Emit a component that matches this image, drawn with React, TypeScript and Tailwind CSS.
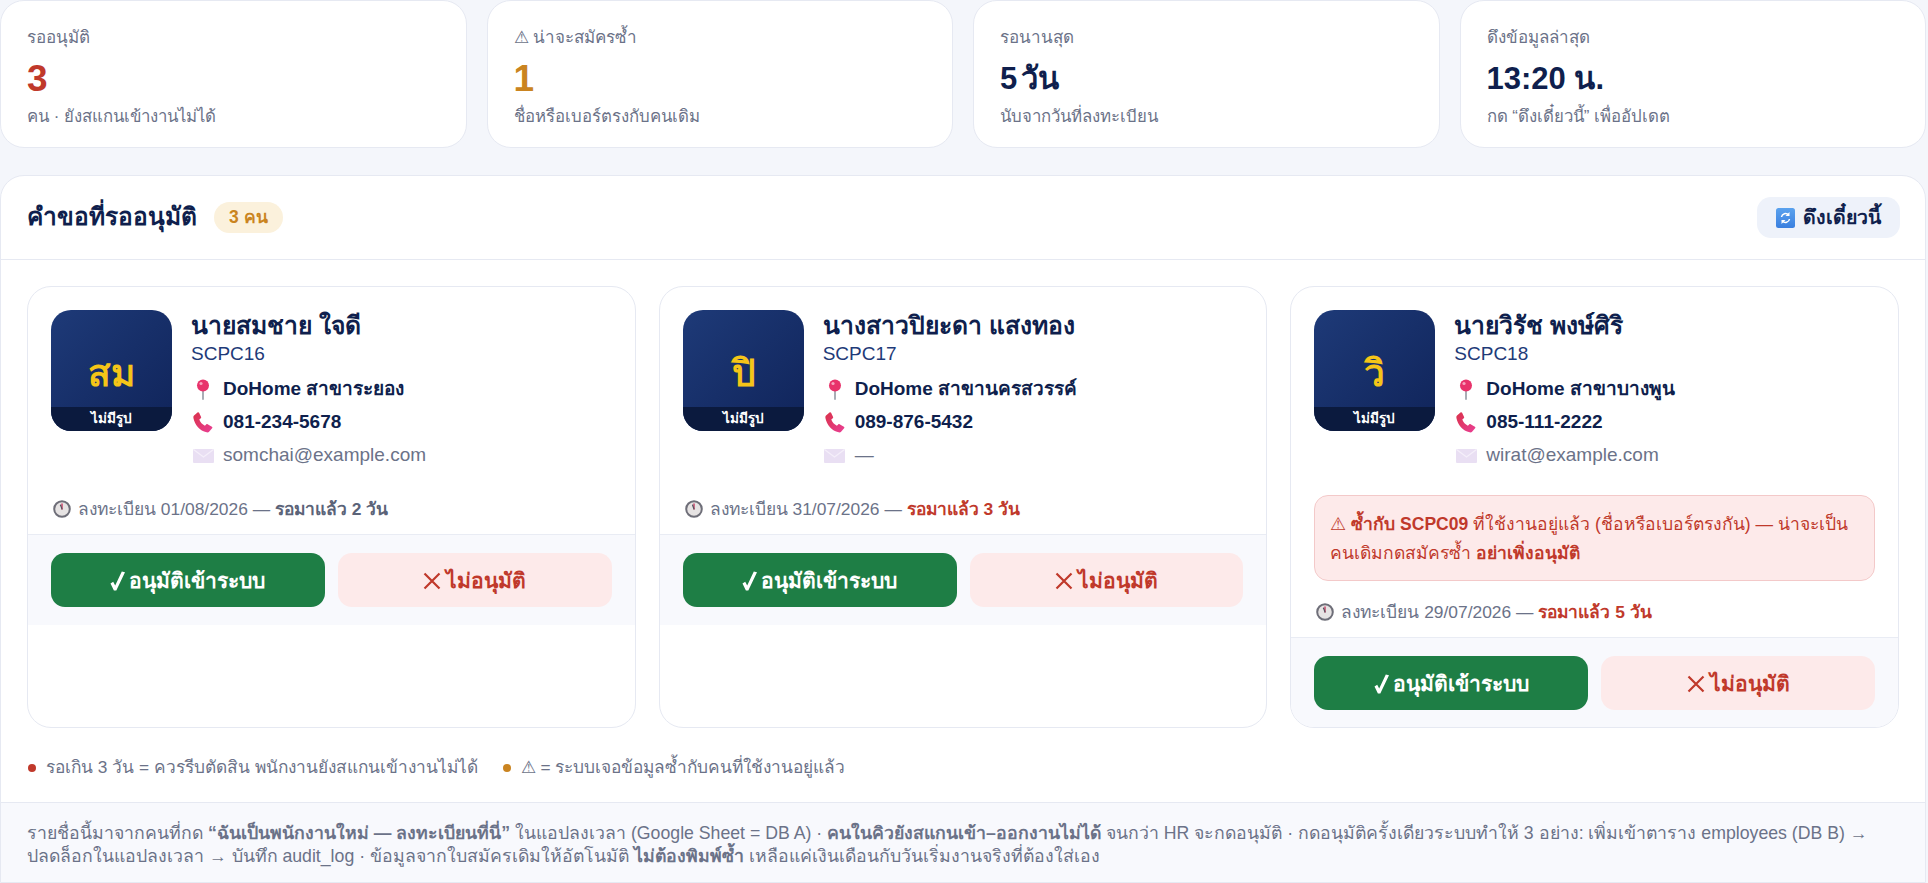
import type { ReactNode } from "react";

type Request = {
  initials: string;
  name: string;
  code: string;
  branch: string;
  phone: string;
  email: string;
  date: string;
  days: number;
  duplicate?: boolean;
};

const requests: Request[] = [
  { initials: "สม", name: "นายสมชาย ใจดี", code: "SCPC16", branch: "สาขาระยอง", phone: "081-234-5678", email: "somchai@example.com", date: "01/08/2026", days: 2 },
  { initials: "ปิ", name: "นางสาวปิยะดา แสงทอง", code: "SCPC17", branch: "สาขานครสวรรค์", phone: "089-876-5432", email: "—", date: "31/07/2026", days: 3 },
  { initials: "วิ", name: "นายวิรัช พงษ์ศิริ", code: "SCPC18", branch: "สาขาบางพูน", phone: "085-111-2222", email: "wirat@example.com", date: "29/07/2026", days: 5, duplicate: true },
];

function PinIcon() {
  return (
    <svg width="14" height="21" viewBox="0 0 14 21">
      <rect x="6" y="10" width="2" height="11" rx="1" fill="#a9adb5" />
      <circle cx="7" cy="6.5" r="6" fill="#e8336b" />
      <circle cx="5" cy="4.5" r="1.6" fill="#f7a3bd" />
    </svg>
  );
}

function PhoneIcon() {
  return (
    <svg width="20" height="21" viewBox="0 0 20 21">
      <defs>
        <linearGradient id="phone" x1="0" y1="0" x2="1" y2="1">
          <stop offset="0" stopColor="#d9324a" />
          <stop offset="1" stopColor="#ea3f95" />
        </linearGradient>
      </defs>
      <path
        d="M1 3.5 4.5.5c.6-.5 1.3-.3 1.6.3l2 4.2c.2.5.1 1-.3 1.3L6.300 7.500c1 2.700 3 5 5.600 6.200l1.300-1.300c.4-.4.900-.5 1.400-.2l4.300 2.500c.6.3.7 1 .2 1.500l-2.800 3.300c-.7.800-1.700 1.100-2.700.8C6.800 18.800 1.800 13 .4 6 .2 5 .4 4.100 1 3.500Z"
        fill="url(#phone)"
      />
    </svg>
  );
}

function MailIcon() {
  return (
    <svg width="21" height="14" viewBox="0 0 21 14">
      <rect width="21" height="14" rx="1" fill="#e9dff3" />
      <path d="M.5.500 10.500 8l10-7.500" fill="none" stroke="#f5effa" strokeWidth="1.200" />
    </svg>
  );
}

function ClockIcon() {
  return (
    <svg width="18" height="18" viewBox="0 0 18 18" className="ml-[2px] shrink-0">
      <circle cx="9" cy="9" r="7.800" fill="#e6e3e3" stroke="#6e6e78" strokeWidth="2" />
      <path d="M9 9V4" stroke="#c9446a" strokeWidth="1.500" strokeLinecap="round" />
      <path d="M9 9 7.500 5" stroke="#55555f" strokeWidth="1.200" strokeLinecap="round" />
    </svg>
  );
}

function RefreshIcon() {
  return (
    <svg width="19" height="20" viewBox="0 0 19 20" className="shrink-0">
      <defs>
        <linearGradient id="refresh" x1="0" y1="0" x2="0" y2="1">
          <stop offset="0" stopColor="#5aa2ee" />
          <stop offset="1" stopColor="#3a7fdf" />
        </linearGradient>
      </defs>
      <rect width="19" height="20" rx="2.500" fill="url(#refresh)" />
      <path d="M5.500 9a4 4 0 0 1 7-2M13.500 11a4 4 0 0 1-7 2" fill="none" stroke="#fff" strokeWidth="1.500" />
      <path d="M13.500 4v4h-4zM5.500 16v-4h4z" fill="#fff" />
    </svg>
  );
}

function CheckIcon() {
  return (
    <svg width="15" height="20" viewBox="0 0 15 20" className="shrink-0">
      <path d="M.5 12.500 3.200 10.800l2 3.700L11.800.5 15 1.200 6.300 19.500H3.900z" fill="#fff" />
    </svg>
  );
}

function CrossIcon() {
  return (
    <svg width="18" height="18" viewBox="0 0 18 18" className="shrink-0">
      <path d="M1.500 1.500l15 15M16.500 1.500l-15 15" stroke="#c0392b" strokeWidth="2.200" />
    </svg>
  );
}

function Stat({ label, value, sub, color, big }: { label: string; value: string; sub: string; color: string; big?: boolean }) {
  return (
    <div className="h-[148px] rounded-[24px] border border-[#e6e9f2] bg-white px-[26px] pt-[24px]">
      <div className="text-[17px] leading-[26px] text-[#6b7288]">{label}</div>
      <div className={`mt-[6px] h-[44px] font-bold leading-[44px] ${big ? "text-[37px]" : "text-[31px]"} ${color}`}>{value}</div>
      <div className="mt-[3px] text-[16.8px] leading-[26px] text-[#6b7288]">{sub}</div>
    </div>
  );
}

function Row({ icon, children }: { icon: ReactNode; children: ReactNode }) {
  return (
    <div className="flex h-[33px] items-center gap-[8px]">
      <span className="flex w-[24px] justify-center">{icon}</span>
      {children}
    </div>
  );
}

function RequestCard({ r }: { r: Request }) {
  const overdue = r.days >= 3;
  return (
    <div className="self-stretch overflow-hidden rounded-[24px] border border-[#e6e9f2] bg-white">
      <div className="flex gap-[19px] px-[23px] pt-[23px]">
        <div className="relative h-[121px] w-[121px] shrink-0 overflow-hidden rounded-[20px] bg-gradient-to-br from-[#1e3a78] to-[#10245a]">
          <div className="flex h-[121px] items-center justify-center pt-[6px] text-[37px] font-bold leading-[44px] text-[#f5c518]">{r.initials}</div>
          <div className="absolute bottom-0 left-0 right-0 h-[24px] bg-[#0b1a3e] text-center text-[13.5px] font-bold leading-[24px] text-white">ไม่มีรูป</div>
        </div>
        <div className="min-w-0 flex-1">
          <div className="mt-[1px] text-[24.7px] font-bold leading-[30px] text-[#0f1f4d]">{r.name}</div>
          <div className="mt-[1px] text-[19px] font-medium leading-[24px] text-[#1e3a78]">{r.code}</div>
          <div className="mt-[7px]">
            <Row icon={<PinIcon />}><span className="text-[19px] font-bold text-[#0f1f4d]">DoHome {r.branch}</span></Row>
            <Row icon={<PhoneIcon />}><span className="text-[19px] font-bold text-[#0f1f4d]">{r.phone}</span></Row>
            <Row icon={<MailIcon />}><span className="text-[19px] text-[#6b7288]">{r.email}</span></Row>
          </div>
        </div>
      </div>
      <div className="px-[23px]">
        {r.duplicate && (
          <div className="mt-[23px] rounded-[14px] border border-[#f3c9c9] bg-[#fdeaea] px-[15px] pb-[12px] pt-[14px] text-[17.500px] leading-[29px] text-[#c0392b]">
            ⚠ <b>ซ้ำกับ SCPC09</b> ที่ใช้งานอยู่แล้ว (ชื่อหรือเบอร์ตรงกัน) — น่าจะเป็นคนเดิมกดสมัครซ้ำ <b>อย่าเพิ่งอนุมัติ</b>
          </div>
        )}
        <div className={`flex h-[30px] items-center gap-[7px] text-[17.400px] text-[#6b7288] ${r.duplicate ? "mt-[16px]" : "mt-[22px]"}`}>
          <ClockIcon />
          <span>
            ลงทะเบียน {r.date} — <b className={overdue ? "text-[#c0392b]" : "text-[#5b6378]"}>รอมาแล้ว {r.days} วัน</b>
          </span>
        </div>
      </div>
      <div className="mt-[10px] flex gap-[13px] border-t border-[#e9ecf4] bg-[#f8f9fd] px-[23px] py-[18px]">
        <button className="flex h-[54px] flex-1 items-center justify-center gap-[4px] rounded-[14px] bg-[#1e7e45] pt-[2px] text-[21px] font-bold text-white"><CheckIcon />อนุมัติเข้าระบบ</button>
        <button className="flex h-[54px] flex-1 items-center justify-center gap-[5px] rounded-[14px] bg-[#fdeaea] pt-[2px] text-[21px] font-bold text-[#c0392b]"><CrossIcon />ไม่อนุมัติ</button>
      </div>
    </div>
  );
}

export default function App() {
  return (
    <div className="h-[883px] overflow-hidden bg-[#f4f6fb] pr-[2px] font-['Liberation_Sans','Noto_Sans',sans-serif]">
      <div className="grid grid-cols-4 gap-[20px]">
        <Stat label="รออนุมัติ" value="3" sub="คน · ยังสแกนเข้างานไม่ได้" color="text-[#c0392b]" big />
        <Stat label="⚠ น่าจะสมัครซ้ำ" value="1" sub="ชื่อหรือเบอร์ตรงกับคนเดิม" color="text-[#ca8420]" big />
        <Stat label="รอนานสุด" value="5 วัน" sub="นับจากวันที่ลงทะเบียน" color="text-[#0f1f4d] [word-spacing:-5px]" />
        <Stat label="ดึงข้อมูลล่าสุด" value="13:20 น." sub="กด “ดึงเดี๋ยวนี้” เพื่ออัปเดต" color="text-[#0f1f4d]" />
      </div>
      <div className="mt-[27px] h-[708px] overflow-hidden rounded-t-[24px] border border-[#e6e9f2] bg-white">
        <div className="flex h-[84px] items-center justify-between border-b border-[#e6e9f2] pl-[26px] pr-[25px]">
          <div className="flex items-center gap-[17px]">
            <h2 className="text-[24.500px] font-bold text-[#0f1f4d]">คำขอที่รออนุมัติ</h2>
            <span className="flex h-[31px] items-center rounded-full bg-[#fbf1dc] px-[15px] text-[17.500px] font-bold text-[#ca8420]">3 คน</span>
          </div>
          <button className="flex h-[41px] items-center gap-[8px] rounded-[14px] bg-[#eef2fa] px-[19px] text-[19.500px] font-bold text-[#0f1f4d]">
            <RefreshIcon />ดึงเดี๋ยวนี้
          </button>
        </div>
        <div className="mx-[26px] mt-[26px] grid h-[442px] grid-cols-3 gap-[23px]">
          {requests.map((r) => (
            <RequestCard key={r.code} r={r} />
          ))}
        </div>
        <div className="flex h-[74px] items-center gap-[25px] pl-[27px] pt-[6px] text-[17.300px] text-[#6b7288]">
          <span className="flex items-center gap-[10px]"><i className="h-[8px] w-[8px] rounded-full bg-[#c0392b]" />รอเกิน 3 วัน = ควรรีบตัดสิน พนักงานยังสแกนเข้างานไม่ได้</span>
          <span className="flex items-center gap-[10px]"><i className="h-[8px] w-[8px] rounded-full bg-[#ca8420]" />⚠ = ระบบเจอข้อมูลซ้ำกับคนที่ใช้งานอยู่แล้ว</span>
        </div>
        <div className="h-[81px] border-t border-[#e6e9f2] bg-[#f8f9fd] pl-[26px] pr-[40px] pt-[19px] text-[17.700px] leading-[23px] text-[#6b7288]">
          รายชื่อนี้มาจากคนที่กด <b>“ฉันเป็นพนักงานใหม่ — ลงทะเบียนที่นี่”</b> ในแอปลงเวลา (Google Sheet = DB A) · <b>คนในคิวยังสแกนเข้า–ออกงานไม่ได้</b> จนกว่า HR จะกดอนุมัติ · กดอนุมัติครั้งเดียวระบบทำให้ 3 อย่าง: เพิ่มเข้าตาราง employees (DB B) → ปลดล็อกในแอปลงเวลา → บันทึก audit_log · ข้อมูลจากใบสมัครเดิมให้อัตโนมัติ <b>ไม่ต้องพิมพ์ซ้ำ</b> เหลือแค่เงินเดือนกับวันเริ่มงานจริงที่ต้องใส่เอง
        </div>
      </div>
    </div>
  );
}
